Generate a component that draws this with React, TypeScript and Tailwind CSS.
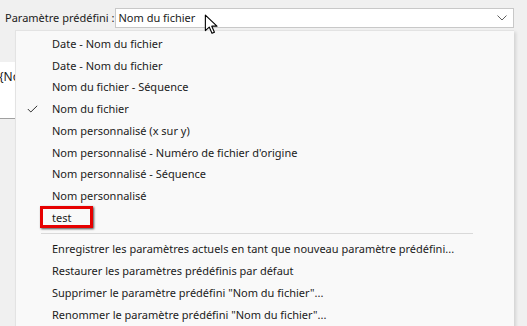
import React from "react";

const items = [
  "Date - Nom du fichier",
  "Date - Nom du fichier",
  "Nom du fichier - Séquence",
  "Nom du fichier",
  "Nom personnalisé (x sur y)",
  "Nom personnalisé - Numéro de fichier d'origine",
  "Nom personnalisé - Séquence",
  "Nom personnalisé",
  "test",
];

const actions = [
  "Enregistrer les paramètres actuels en tant que nouveau paramètre prédéfini...",
  "Restaurer les paramètres prédéfinis par défaut",
  'Supprimer le paramètre prédéfini "Nom du fichier"...',
  'Renommer le paramètre prédéfini "Nom du fichier"...',
];

export default function App() {
  return (
    <div
      className="relative w-[527px] h-[326px] overflow-hidden bg-[#f0f0f0] text-[11px] text-[#1b1b1b]"
      style={{ fontFamily: '"Noto Sans", "Open Sans", sans-serif' }}
    >
      <div className="flex items-center pt-[8px] pl-[5px] pr-[13px]">
        <span className="leading-[20px] whitespace-nowrap">Paramètre prédéfini :</span>
        <div className="ml-auto flex items-center justify-between w-[402px] h-[20px] bg-white border border-[#c8c8c8] pl-[3px] pr-[6px]">
          <span className="leading-[18px]">Nom du fichier</span>
          <svg width="10" height="6" viewBox="0 0 10 6">
            <path d="M0.5 0.5 L5 5 L9.5 0.5" fill="none" stroke="#606060" strokeWidth="1" />
          </svg>
        </div>
      </div>

      <div className="mt-[34px] w-[480px] h-[57px] bg-white border-b border-[#a0a0a0] flex items-start">
        <span className="text-[12px] leading-none mt-[9px] ml-[-1px]">{"{Nom}"}</span>
      </div>

      <div className="absolute left-[15px] top-[30px] w-[499px] h-[310px] bg-[#f9f9f9] border-l border-t border-[#e3e3e3] shadow-[2px_2px_3px_rgba(0,0,0,0.12)] pt-[2px]">
        {items.map((t, i) => (
          <div key={i} className="relative flex items-center h-[21.75px]">
            {i === 3 && (
              <svg className="absolute left-[11px] top-[7px]" width="11" height="8" viewBox="0 0 11 8">
                <path d="M0.8 4 L3.8 7 L10.2 0.8" fill="none" stroke="#333" strokeWidth="1" />
              </svg>
            )}
            {i === 8 && (
              <div className="absolute left-[24px] top-[-1px] w-[53px] h-[22px] border-[3px] border-[#e60000] shadow-[1px_1px_2px_rgba(0,0,0,0.7)]" />
            )}
            <span className="ml-[36px] leading-[20px]">{t}</span>
          </div>
        ))}
        <div className="h-[9.25px] flex items-center">
          <div className="ml-[25px] w-[432px] h-px bg-[#d9d9d9] mt-[1px]" />
        </div>
        {actions.map((t, i) => (
          <div key={i} className="flex items-center h-[22px]">
            <span className="ml-[36px] leading-[20px]">{t}</span>
          </div>
        ))}
      </div>

      <svg className="absolute left-[204px] top-[14px]" width="16" height="21" viewBox="0 0 14 19">
        <path
          d="M1 1 L1 15 L4.5 11.8 L7 17.5 L9.2 16.5 L6.8 11 L11.5 11 Z"
          fill="#fff"
          stroke="#000"
          strokeWidth="1"
          strokeLinejoin="round"
        />
      </svg>
    </div>
  );
}
